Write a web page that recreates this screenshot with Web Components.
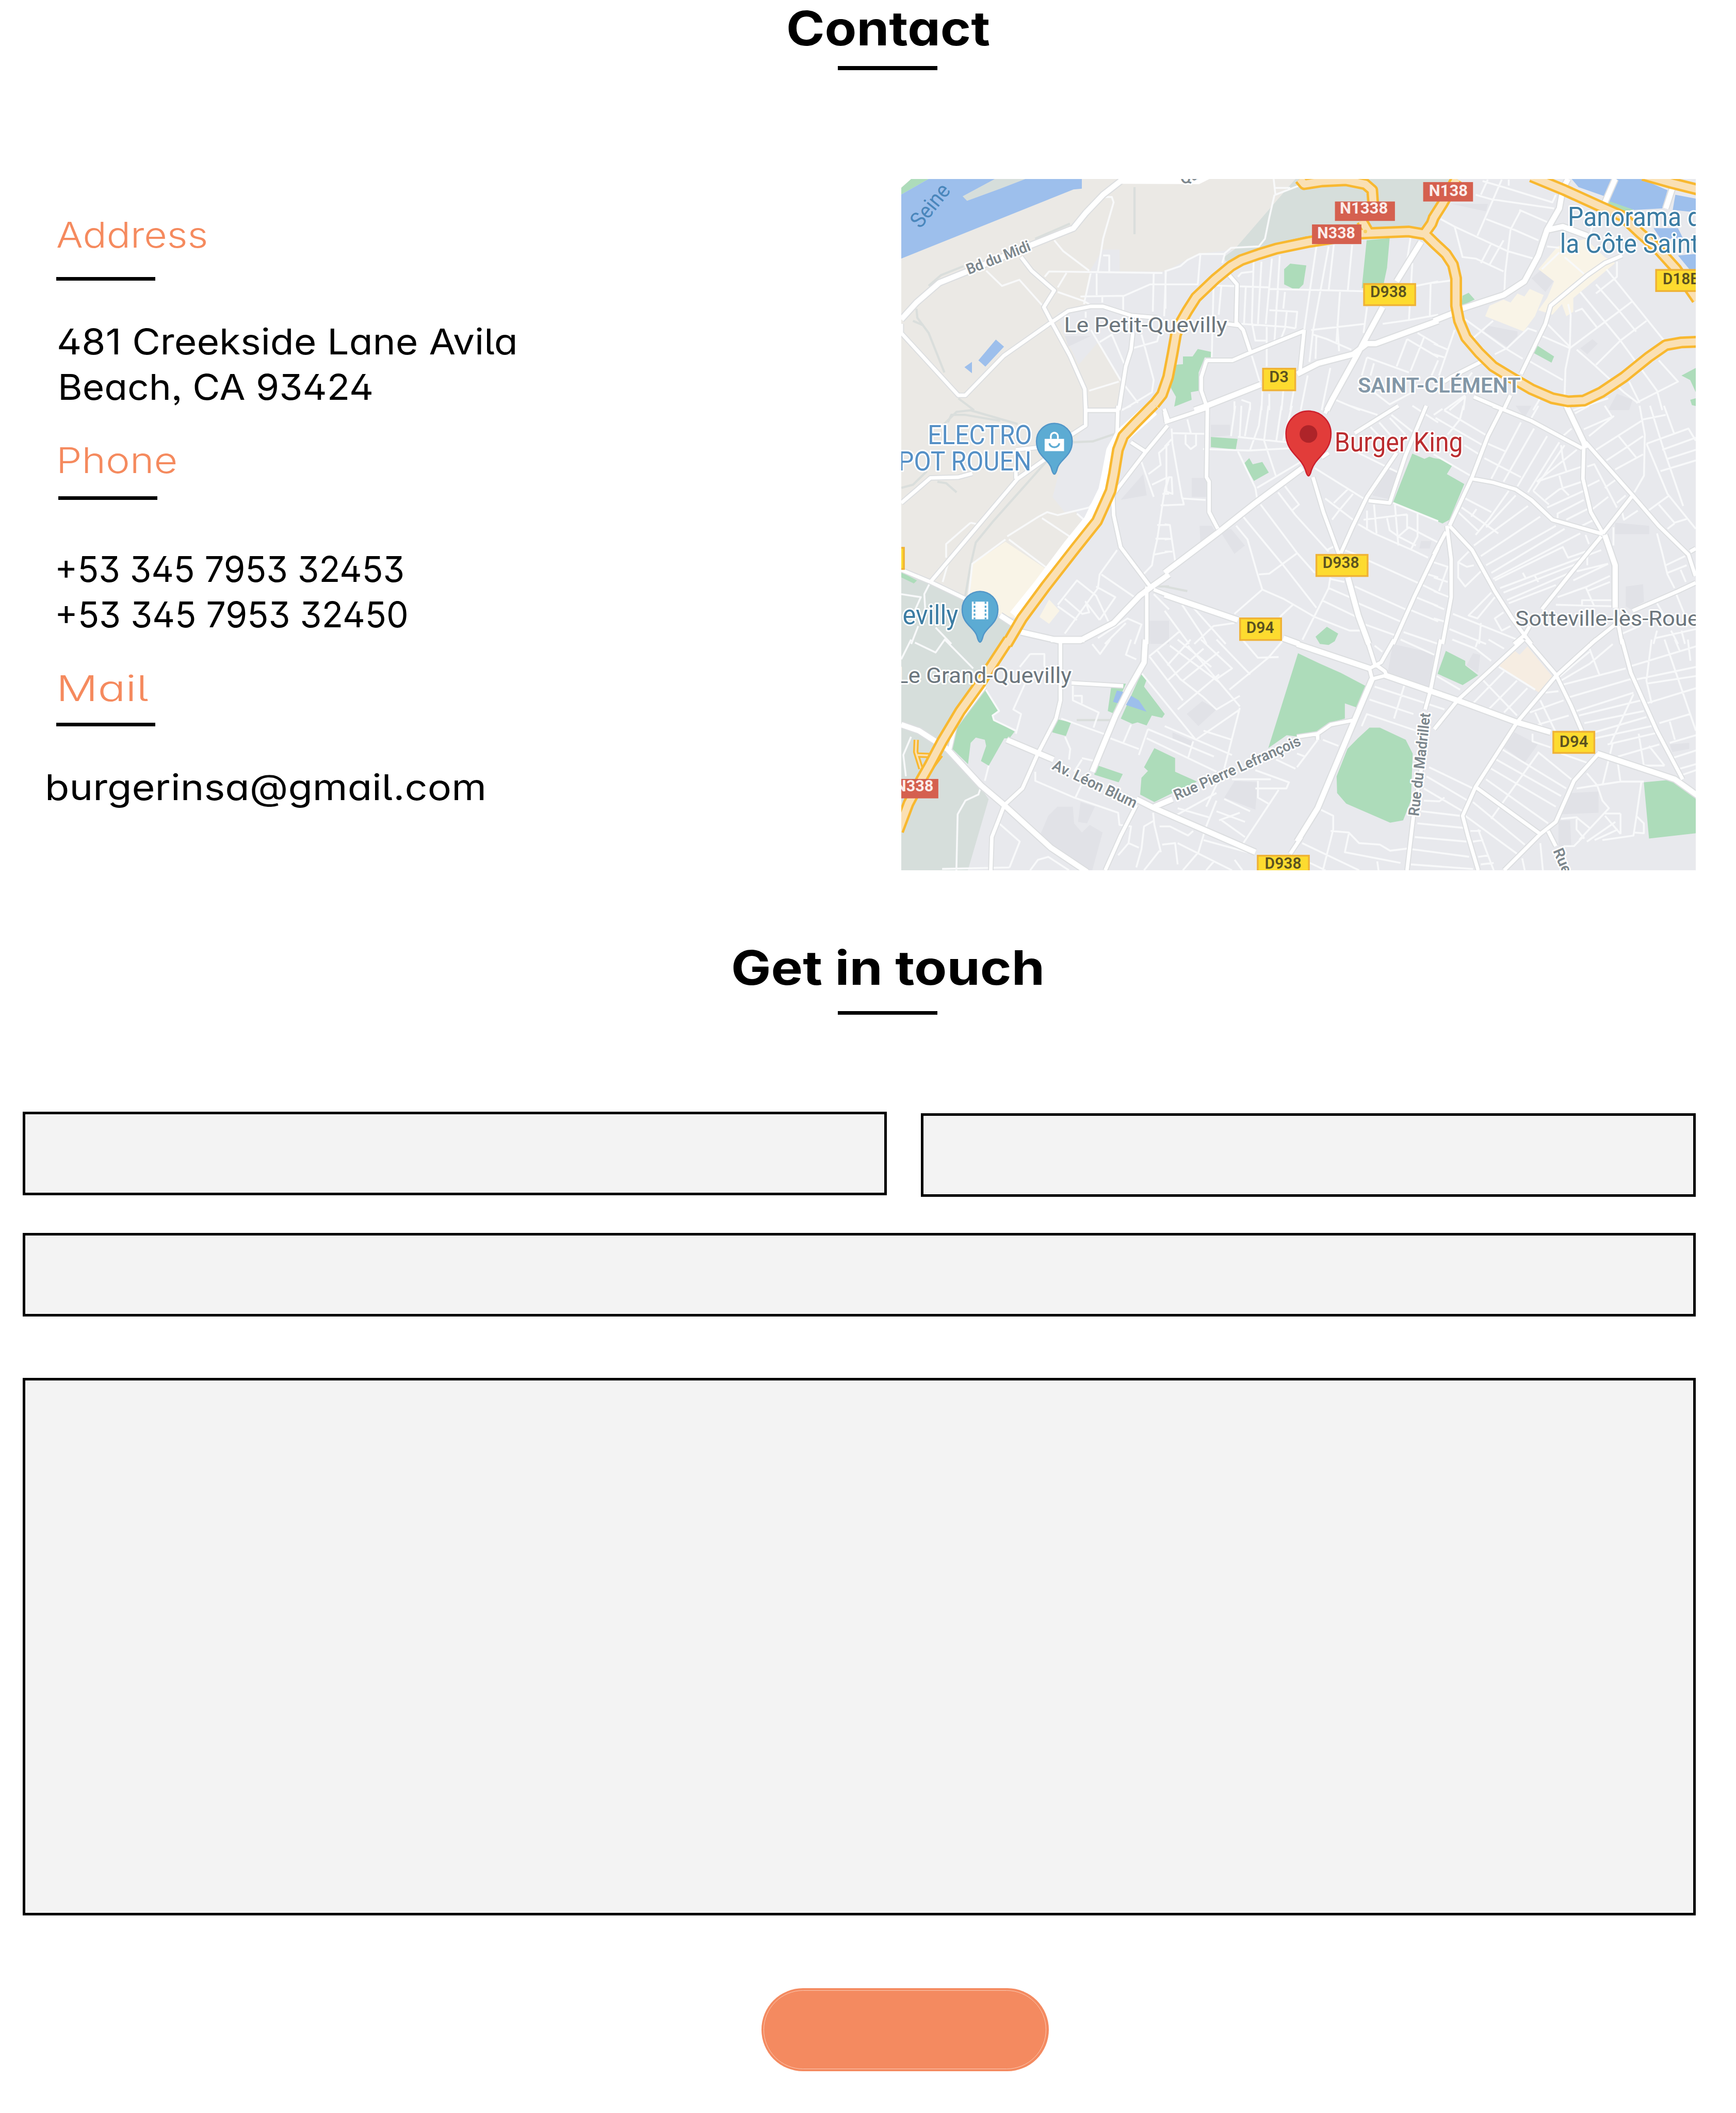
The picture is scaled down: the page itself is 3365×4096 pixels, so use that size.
<!DOCTYPE html>
<html lang="en">
<head>
<meta charset="utf-8">
<title>Contact</title>
<style>
:root{--u:.85513px}
html,body{margin:0;background:#fff}
body{width:calc(var(--u)*3935);height:calc(var(--u)*4790);overflow:hidden;font-family:Inter,"Open Sans","Liberation Sans",sans-serif;color:#000}
</style>
</head>
<body>
<contact-page></contact-page>
<script>
const def=(name,html,init)=>customElements.define(name,class extends HTMLElement{
  constructor(){super();this.attachShadow({mode:'open'}).innerHTML=html}
  connectedCallback(){init&&init.call(this,this.shadowRoot)}
});

/* A line of text stretched to a given width (design units) */
def('fit-text',`<style>
:host{display:block;white-space:nowrap;height:calc(var(--u)*var(--lh,103));line-height:calc(var(--u)*var(--lh,103));
font-size:calc(var(--u)*var(--fs,81));font-feature-settings:"cv11","cv09","cv02","cv05","ss03"}
span{display:inline-block;transform-origin:0 50%}
</style><span><slot></slot></span>`,function(r){
  const s=r.querySelector('span'),w=+this.getAttribute('w'),u=.85513;
  const fit=()=>{s.style.transform='none';const k=w*u/s.getBoundingClientRect().width;s.style.transform=`scaleX(${k})`};
  this.style.width=w*u+'px';this.style.marginLeft=(+this.getAttribute('x')||0)*u+'px';
  fit();document.fonts.ready.then(fit);
});

def('rule-line',`<style>:host{display:block;width:calc(var(--u)*225);height:calc(var(--u)*8.6);background:#000}</style>`);

def('section-heading',`<style>
:host{display:flex;flex-direction:column;align-items:center;padding-left:calc(var(--u)*89);font-weight:700;--fs:107;--lh:128}
rule-line{margin-top:calc(var(--u)*var(--gap))}
</style><slot></slot><rule-line></rule-line>`);

def('info-block',`<style>
:host{display:block}
.t{color:#f58a5e;font-weight:360}
rule-line{margin-top:calc(var(--u)*var(--a));margin-left:calc(var(--u)*var(--rx,0))}
.b{margin-top:calc(var(--u)*var(--b));font-weight:400}
</style><div class="t"><slot name="title"></slot></div><rule-line></rule-line><div class="b"><slot></slot></div>`);

def('form-field',`<style>
:host{display:block}
input,textarea{display:block;box-sizing:border-box;width:100%;height:100%;margin:0;border:calc(var(--u)*6) solid #000;border-radius:0;background:#f3f3f3;resize:none;outline:0;padding:0 20px;font:inherit}
</style>`,function(r){r.append(document.createElement(this.hasAttribute('multiline')?'textarea':'input'))});

def('send-button',`<style>
:host{display:block;width:calc(var(--u)*651);height:calc(var(--u)*189)}
button{display:block;width:100%;height:100%;margin:0;border:0;border-radius:999px;background:#f48a60;padding:calc(var(--u)*5)}
i{display:block;box-sizing:border-box;width:100%;height:100%;border-radius:999px;border:1px solid #fbc9b3}
</style><button><i></i></button>`);

/* City map. Geometry is split in tiles: [origin x, origin y, x scale, y scale] */
const TILES={1:[2030,390,.39541,.34439],2:[2640,390,.39541,.34439],3:[3250,390,.39541,.34439],
4:[2030,920,.39541,.34439],5:[2640,920,.39541,.34439],6:[3250,920,.39541,.34439],
7:[2030,1450,.58673,.34439],8:[2940,1450,.58673,.34439],0:[0,0,1,1]};
const path=(layer,close)=>Object.entries(layer).map(([t,s])=>{const[ox,oy,a,b]=TILES[t];
  return s.split('|').map(l=>'M'+l.trim().split(/\s+/).map(p=>{const[x,y]=p.split(',');return (ox+x*a).toFixed(1)+' '+(oy+y*b).toFixed(1)}).join('L')+(close?'Z':'')).join('')}).join('');

const industrial={0:'2043,406 2937,406 2798,566 2715,576 2640,616 2538,616 2538,566 2500,566 2473,610 2459,676 2465,690 2398,710 2410,755 2445,827 2489,776 2540,862 2536,907 2536,925 2461,930 2461,965 2410,1034 2386,1127 2413,1161 2437,1158 2457,1189 2378,1292 2250,1380 2109,1319 2043,1292'};
const teal={0:'2043,1292 2109,1319 2184,1357 2299,1416 2250,1520 2170,1640 2159,1698 2224,1787 2241,1812 2194,1973 2043,1973',
2:'750,46 1643,46 1500,400 1200,400 830,460 350,590 340,560 400,510',1:'570,46 745,46 600,110 410,190 385,160'};
const dark={8:'370,30 530,90 510,330 350,220|840,610 930,690 880,810 800,710|1060,1010 1165,1000 1165,1140 1020,1150|1010,1190 1055,1190 1060,1360 1010,1360|1440,690 1515,680 1515,720 1450,740|655,170 680,90 708,100 700,220',
7:'1185,405 1240,460 1170,570 1125,490|1310,930 1400,940 1390,1120 1270,1040|625,1100 685,1100 690,1210 720,1270 750,1220 800,1270 760,1519 740,1519 600,1370 560,1280 590,1160|715,1070 770,1100 740,1210 705,1200|1070,610 1150,670 1140,700 1070,650',
6:'1040,770 1235,790 1235,845 1040,845|1100,1190 1200,1175 1205,1290 1130,1340 1100,1320|470,0 560,0 520,80',
5:'265,125 375,125 375,195 265,205|155,475 240,475 240,600 155,600|320,830 380,810 460,920 400,975|200,790 270,790 290,830 205,900|1280,420 1340,440 1290,615 1190,590|1470,890 1530,890 1520,940 1460,940',
3:'300,1010 480,1050 480,1080 420,1150 290,1050|560,700 620,640 700,700 640,790|100,210 310,210 300,260|1050,1460 1140,1500 1120,1568 1000,1568|840,1160 910,1100 940,1130 880,1200',4:'1290,620 1420,450 1440,590|1450,1415 1568,1415 1568,1568 1460,1568',1:'970,1080 1120,1080 990,1150'};
const green={1:'90,46 190,46 33,148 33,105',2:'720,603 812,615 795,740 770,768 735,768 685,740 685,640|1158,450 1290,435 1275,630 1255,740 1130,765|190,1165 268,1185 265,1220 230,1220 195,1320 195,1440 150,1450 155,1500 55,1545 65,1480 35,1420 60,1270 105,1265 105,1215 160,1215',
3:'1010,185 1150,245 1090,270 990,225|200,795 235,840 160,880 165,815|590,1140 690,1215 675,1255 570,1190|1502,1290 1420,1340 1470,1370 1502,1450|1502,1490 1470,1500 1480,1535 1502,1540',
4:'33,1095 123,1150 105,1170 33,1130',5:'265,205 418,218 408,288 265,272|485,345 505,385 560,370 597,440 512,495 455,380|930,1455 995,1500 975,1550 940,1575 890,1568 865,1520',
6:'0,345 60,355 105,395 75,450 175,515 90,750 50,775 0,750 -233,635 -123,315 -53,350 -25,335',
7:'345,320 400,460 375,500 380,530 460,605 440,650 420,650 360,830 330,800 350,700 345,660 310,645 290,680 280,820 220,720 225,600|625,525 678,545 658,635 605,610|835,290 890,290 840,485 820,470|950,220 970,265 960,310 1040,490 1030,515 990,500 970,565 935,545 915,555 870,520|775,825 878,885 862,940 768,890|1000,715 1080,780 1080,870 1165,935 1070,1010 1000,1070 945,1020 950,910 975,865 960,840',
8:'-111,715 4,90 90,160 170,220 270,310 235,450 185,420 185,520 120,550 70,610 10,640 -40,630|280,580 320,580 420,660 447,750 440,1060 410,1190 360,1205 190,1080 155,1010 153,900 195,720 235,650|575,75 650,140 650,170 700,235 640,300 543,225|1340,940 1430,925 1490,960 1541,1030 1541,1275 1360,1310'};
const water={1:'190,46 570,46 385,160 410,190 600,110 745,46 1068,46 1068,110 1020,115 33,570 33,148|575,1103 622,1150 515,1282 475,1240|438,1250 438,1325 395,1285',
3:'790,46 1030,46 980,160 830,100|1050,46 1190,46 1340,120 1310,240 1150,250 1000,190|1385,150 1502,175 1502,265 1370,250|1260,370 1400,370 1430,440 1300,440|1400,550 1502,540 1502,640 1465,640',
7:'855,335 880,345 860,420 840,410|910,370 940,400 970,475 890,430'};
const cream={4:'630,895 870,1080 690,1400 590,1370 430,1250 430,1050|880,1275 940,1350 880,1435 825,1390',
3:'710,490 870,440 980,560 1040,600 800,830 800,920 760,950 735,870 680,940 600,910 650,830 690,720 600,640|550,770 630,810 580,950 515,1050 295,950 320,880 400,840 440,860 480,800 520,820'};
const peach={8:'835,65 860,100 890,45 990,250 935,350 775,165'};
const track={1:'120,900 125,960 190,1060 280,1320|360,1490 450,1568|1370,100 1370,410|100,980 160,1010|190,750 260,680 390,620|800,440 1000,340',
4:'270,130 350,40 430,30 700,120|300,110 320,60 400,60 600,100|240,500 290,510 350,570|33,540 100,520 180,430|870,360 560,760 460,900 430,1050 400,1250|1020,240 1130,235 1270,180|1480,1190 1568,1190',5:'0,1190 130,1220',7:'700,530 840,530'};
const minor={
1:'520,650 610,750 710,710 850,890|910,450 960,520 1110,650|1190,165 1240,165 1250,200 1190,440 1160,655|1190,550 1225,550 1225,655|855,690 880,655 1530,665|1120,660 1080,870|980,665 930,760|930,790 1080,850 1110,870|1060,820 1310,815 1460,740 1568,740|1153,655 1153,810|1185,820 1185,860|1305,815 1305,910|1480,670 1475,920|1550,655 1540,950|1090,920 1090,960|1120,1040 1290,1370 1390,1520|1170,1120 1240,1070 1310,1260|1360,1160 1500,1115 1510,1070|1410,1070 1480,1370 1470,1450 1300,1568|1110,1440 1280,1380',
2:'0,655 90,620 130,580 200,540 340,540 380,500 540,490 575,440 600,300 630,150|625,46 635,150 770,90|630,105 720,105|345,540 330,600|205,540 190,740 0,740|5,655 5,900|280,760 270,1220|325,750 310,940|420,690 440,665 510,655|510,590 500,990|555,590 535,1000|615,570 580,1000|660,550 630,1110|465,760 455,1000|240,745 600,760 600,770 1140,785|600,910 760,920 750,1030|700,920 690,1030 670,1090|440,1000 700,1020 750,1030|500,990 520,1110 580,1110|585,1020 585,1280|870,490 830,800 800,1040|940,490 900,740 850,1050 830,1250|970,480 940,780|1075,480 1050,780|1005,790 985,1120|690,790 680,900|650,780 640,900|1160,890 1140,1060|840,1040 1150,1000|850,1070 930,1100 1070,1170|870,1080 865,1230|990,1000 1000,1180|1410,430 1390,580|1420,600 1400,980|1525,730 1520,950|1440,750 1568,720|1250,1000 1400,975 1568,940|1450,1060 1568,1140|1390,1100 1568,1220|1390,1100 1330,1280|1490,1080 1410,1310|1160,1220 1400,1320|1160,1220 1130,1340|1200,1260 1180,1340|500,1210 550,1400|560,1440 555,1568|820,1340 780,1568|950,1290 900,1568|980,1500 1120,1568|400,1510 400,1568|600,1460 600,1568|680,1440 670,1568|740,1440 720,1568|1200,1450 1290,1530 1420,1450|1568,1240 1530,1340|440,1500 490,1520 490,1568',
3:'280,60 400,100 680,200 700,150|240,150 330,180 690,240|310,50 270,150|390,50 250,420|430,50 430,90|40,310 120,360 420,520 600,580|300,310 460,380 600,450|500,250 440,380 410,660 405,790|490,250 650,330|120,360 165,560 240,570 400,655|330,470 270,600|400,450 320,610|0,730 95,715|650,490 720,500|860,670 750,560|620,640 720,530|180,970 410,1160 510,1230|230,1090 340,980|420,1160 540,1030 590,1050|420,1160 350,1200|650,1000 780,1150|620,1080 780,1160 755,1300 750,1470|770,870 785,940 780,1160|780,1160 1060,920 1140,850|810,920 850,900 940,1030|540,1240 740,1370|820,1170 920,1270 1090,1450 1170,1520|930,1270 1070,1110 1220,980|840,790 1070,1110 1280,1440|990,640 1060,740 1320,1110|930,740 1060,910 1160,1050|1050,590 1050,690 930,800|1290,1240 1400,1380 1160,1520|1120,1380 1180,1520|1210,1330 1280,1440 1310,1568|0,1130 80,1170|120,1040 30,1340|0,1200 60,1220|90,1568 180,1480 170,1568|610,1490 570,1568|800,1568 1000,1490|60,1568 180,1470|220,1320 180,1380|910,350 900,400',
4:'200,1160 165,1240 170,1340|430,770 470,780|430,770 290,910 290,1000|300,1040 270,1160|640,860 820,730 870,700 930,720 1110,670 1190,550|840,740 1010,870|1040,710 1080,750|650,880 870,1070|630,880 440,1040 420,1250|33,1240 145,1260 110,1350|130,1450 90,1568|230,1460 320,1568|1270,950 1170,1110 1160,1200 970,1500|1180,1110 1370,1260|930,1310 1040,1150 1150,1250 1220,1420|970,1270 1070,1370 1110,1360 1090,1290 1170,1410|930,1320 1040,1410|1150,1190 1260,1260 1170,1410|1480,1240 1568,1340|1160,1530 1330,1400 1410,1440 1370,1568|1200,1568 1320,1430|1568,470 1540,580 1530,650 1500,880 1480,980 1470,1050 1420,1110|1530,580 1568,580|1520,655 1568,655|1500,785 1568,785|1490,875 1568,875|1480,980 1568,960|1410,370 1480,600|1450,450 1520,390 1510,310 1568,250|1470,520 1560,470|1290,30 1350,0',
5:'40,180 235,185|130,90 150,180|180,190 180,260 150,285 120,250 120,190|40,150 45,250 100,610 235,620|10,260 10,560|0,655 110,650 100,600|20,470 0,560 45,580 40,470 20,470|0,270 40,220|405,0 380,200|440,0 430,210|490,0 460,200|555,0 540,130 490,290|595,0 570,230 640,470|670,0 640,230|730,0 680,230|420,205 650,235 700,240|220,285 480,295 720,280|420,300 520,540 530,610|530,540 780,370|690,530 770,650 730,690|650,570 750,720 940,960|550,650 760,970 860,1100|450,730 680,1050 870,1330|410,790 475,880 530,1100 560,1210|540,1110 600,1105 760,970|400,1370 560,1210 680,1270 860,1390 1060,1480 1120,1480|660,1390 735,1310|860,410 1140,610|970,640 1050,550|920,610 1080,750|1080,580 1000,690 960,750|1110,310 1340,440|1110,780 1200,840 1420,950 1510,1000|1060,0 1220,60|1230,110 1300,200|1180,140 1230,200|1300,60 1420,170|1290,80 1380,190|1140,750 1390,715|1200,650 1215,840|1320,650 1340,920|1160,690 1160,820|1275,740 1290,820 1340,860 1400,800 1568,900|1390,715 1390,810|1450,700 1450,860 1410,950|1310,640 1568,760|1340,860 1440,920|1170,1020 1460,1170|1030,950 1100,980|930,950 980,920|950,1130 940,1200 790,1540|950,1140 1030,1160|940,1200 1060,1260|900,1280 1100,1390|1090,1190 1380,1340|1110,1300 1350,1420|1150,1440 1320,1510|1440,1260 1568,1320|1400,1340 1568,1420|1370,1490 1568,1568|1480,1180 1568,1230|1510,1110 1568,1130|0,780 30,785 40,870 60,1020|0,880 40,875|0,960 45,960|0,1350 140,1568|100,1310 210,1500 240,1568|150,1310 350,1568|0,1568 90,1480|170,1568 280,1450 400,1430|1420,0 1568,110',
6:'500,110 330,480|575,150 400,500|650,200 480,530|720,240 540,570|750,260 570,560|310,250 410,300|290,345 500,470|175,260 260,320|60,30 310,200|10,80 280,260|170,0 150,90 80,190|0,60 50,20|0,320 210,460|600,0 560,80|790,150 740,200|730,260 740,350 760,430|820,290 590,500|590,500 850,400|720,460 740,550 775,590|570,560 660,650|640,620 720,550 850,500|650,670 860,560|710,740 710,710 860,620|760,750 880,680|850,790 920,750|880,400 920,385 1050,670|880,530 950,490|910,680 1000,600|980,540 1040,490|860,155 1030,70 890,200|810,50 890,0|930,290 1190,100|990,360 1110,270 1200,200|1040,420 1200,320|1060,200 1160,340|980,0 1020,70|1180,0 1210,190 1205,460 1150,570|1200,90 1330,60|1240,0 1310,260|1320,0 1380,190|1220,250 1460,150 1502,230|1310,290 1502,210|1340,350 1502,290|1300,430 1502,360|1220,250 1340,580 1502,810|1310,260 1430,660|1230,690 1350,590|1290,650 1380,770 1450,745|1340,810 1380,775|1080,700 1090,750 1170,690|1050,640 1100,590|180,610 330,700|160,670 370,840|140,700 260,830|245,680 215,730|430,560 320,740 240,850|470,590 300,800|540,660 230,920|610,730 270,990|700,790 300,1050|750,810 330,1100|840,840 340,1140|350,1150 740,930 770,1000 870,960|380,1200 960,950|400,1230 820,1040|820,1090 1000,1040|420,1280 780,1100|430,1300 700,1180|510,1100 530,1140|580,1120 600,1160|800,1150 1000,1040|870,850 890,910|880,990 880,1050|1280,840 1310,970 1340,1110 1380,1200|1330,1050 1440,990|1340,1100 1450,1050|1415,1080 1445,1160|700,1310 1020,1320|850,1320 850,1280 1020,1280|870,1190 920,1320|710,1260 880,1190 1010,1120|880,1220 1010,1160|1030,800 1030,920|200,960 140,1030 190,1060 230,1050|140,1030 140,1130 180,1190 270,1090|330,1230 200,1380 250,1400 350,1260|400,1360 350,1400 390,1480 440,1450|110,1370 480,1540|90,1470 300,1568|0,1030 80,1060 30,1220|0,1130 80,1160|0,1220 90,1260|0,1310 60,1340|0,1400 60,1420|270,1430 260,1568|1390,1240 1440,1380|1280,1300 1330,1400|1270,1530 1502,1470|1280,1480 1260,1568|1360,1480 1400,1568|1420,1480 1440,1568|1080,1500 1180,1450',
7:'60,0 22,130|75,20 155,85 190,0 300,190|345,320 400,470 375,500 380,530 465,600|500,290 455,460 485,490 465,620|520,95 575,95 575,180|520,95 480,180|685,290 685,400 785,480 765,580|690,370 720,370 720,420|640,520 820,630|655,640 675,720 670,790|760,30 790,95 830,0|910,0 890,100 930,130|950,220 1160,660|980,110 1110,400|1010,70 1100,260 1190,380 1240,460 1330,370|1060,0 980,110|1060,40 1250,280|1090,0 1220,180|1140,0 1050,170|1190,60 1050,270|1250,80 1110,270|1180,0 1300,190 1240,260|1290,330 1440,120 1500,0|1240,0 1370,230|1340,0 1400,120 1480,115|1090,460 1250,230|1130,40 1330,440|1330,450 1270,850|1160,660 1330,460|975,590 1230,770|1040,570 1300,760|975,590 940,760|830,650 940,720|910,560 880,680|970,650 1240,870|1190,600 1300,660|1150,670 1130,780|540,870 540,930 690,1040 860,1140 865,1220 910,1230 900,1340 860,1420|720,950 695,1040|720,790 690,870|720,780 770,800|235,1519 240,1150 270,1060 320,1020 330,970|360,830 345,930|400,1210 480,1330 440,1500|180,1510 440,1500|520,1519 550,1450 590,1430 670,1519|995,1140 1000,1220 1025,1400|1000,1190 960,1230 950,1380 930,1500|1020,1230 1060,1230 1130,1290 1150,1260|1200,1230 1170,1400 1110,1519|1030,1350 1080,1340 1090,1480|1090,1340 1300,1519|900,1340 940,1370|1020,1390 960,1519|1190,1320 1360,1400|1080,1160 1240,1010|1090,1110 1210,1170|1240,1060 1200,1230|1270,1050 1370,1130|1240,1130 1350,1200|1260,1190 1350,1300|1300,920 1450,920|1250,920 1200,1100|1400,930 1400,1040 1440,1080|1390,980 1510,980 1520,940 1390,860|1480,990 1340,1350|1470,790 1545,850|60,640 30,760 40,900|1330,1140 1250,1190|1230,1460 1200,1519|1310,1450 1340,1519',
8:'300,310 570,460|280,395 450,490|415,300 375,520|250,570 270,490 460,600|300,40 330,80|400,0 530,100|540,240 630,330|600,0 690,60 750,140|700,0 690,50|740,0 800,60|800,210 680,420|850,270 740,460|890,320 800,480|720,270 850,500|780,180 920,330|940,400 1000,610|920,480 950,590|900,480 1030,400|930,560 1050,500|960,350 1010,340|510,840 680,980|500,900 660,1060|490,980 640,1130|790,720 1040,980|770,790 1020,1030|750,850 1000,1100|730,920 970,1210|680,1070 880,1350|650,1160 850,1410|935,740 750,1180|930,740 1060,920|490,1060 550,1065 570,1040|480,1130 630,1160|465,1210 645,1240|455,1300 655,1330|445,1380 665,1430|440,1480 680,1510|700,1250 760,1519|670,1260 710,1260|680,1330 720,1320|700,1430 740,1420|710,1480 760,1470|940,1340 950,1519|1010,280 1130,160 1220,30|1010,250 1130,80|1020,300 1270,190|1050,380 1290,260|1080,470 1300,350|1090,500 1330,400|1110,550 1340,470|1130,620 1350,510|1150,650 1370,570|1200,690 1400,610|1280,180 1541,45|1290,270 1541,180|1350,290 1541,240|1350,420 1541,320|1400,550 1520,490|1440,680 1541,630|1210,690 1300,360|1130,60 1170,240|1370,0 1350,270 1370,420|1420,0 1541,600|1460,0 1480,80|1510,0 1520,140|1320,620 1340,830 1420,830|1360,700 1420,830|1220,680 1180,960|1240,820 1250,940|1080,980 1250,935 1340,935|1330,940 1310,1180 1300,1290 1180,1320|1310,1160 1340,1210 1340,1275 1300,1270|1120,880 1160,960 1180,1060 1205,1110 1090,1320|1250,1145 1250,1280|1190,1145 1250,1145|1190,1160 1250,1280|1020,1180 1080,1170 1130,1240|1230,1200 1120,1330|1240,1250 1150,1320|1080,1180 1080,1250 1110,1310|1240,770 1400,690|1450,780 1541,730|1480,850 1541,820|1490,890 1541,860|1440,540 1460,660|80,1110 140,1160 140,1250 100,1519|130,1260 200,1270 240,1340 320,1350 360,1390 430,1375|200,1280 185,1400 400,1470|20,1340 240,1519|310,1460 315,1519|50,1470 110,1519|910,620 910,670 980,710|1020,750 1120,810|80,660 0,840|100,660 160,700|0,750 30,770|1030,1360 1070,1360 1110,1290|870,1440 880,1519'};
const mid={
1:'720,560 780,650 910,780 850,890 900,1000 1000,1210 1085,1430 1090,1568|33,1000 33,1060 360,1470 400,1470 620,1210 880,1000 990,915 1120,885 1190,885 1350,945 1500,960|1360,1060 1350,1170 1320,1280 1280,1568',
2:'370,680 415,740 410,990 450,1040 490,1180|360,1000 420,1010|235,1240 390,1240 490,1190 800,1045|800,1040 775,1320|240,1240 210,1350 210,1440 240,1540',
3:'270,1250 100,1350 60,1380|230,1480 390,1560|1080,550 980,600 880,680 670,880 640,1000 500,1330|440,1470 400,1568',
4:'1090,0 1090,130 1010,190|1275,0 1270,180 1240,260|1090,30 1275,30|33,640 200,475 360,470 440,445|860,350 700,480 200,1160|690,480 690,430|690,290 810,275|33,1080 200,1160 400,1270|1245,580 1250,720 1290,930 1460,1190|1250,580 1430,310 1560,130|1350,240 1430,300|1440,1190 1440,1568|1480,1210 1568,1250|1540,20 1568,110',
5:'0,110 245,15|245,0 240,470 255,500 255,700 305,810|0,40 10,110|850,470 910,700 1000,980|1010,970 1080,790 1160,600 1330,310|1500,0 1380,330 1290,640 1170,625|1568,930 1430,1260 1310,1568|1090,180 1340,0|940,0 920,50|940,310 900,340',
6:'390,20 310,200 220,470 90,790|340,0 400,25 560,100 850,280|860,270 855,480 900,700 970,840|220,480 340,505 470,550 560,620 680,750 970,845|970,840 1140,590|90,790 220,950 350,1220 450,1400 520,1510|960,860 780,1110 620,1340|550,1450 520,1510 460,1568|520,1510 560,1568|75,790 100,1010 100,1260 50,1568|70,830 0,980|1502,1165 1400,1220 1140,1350|1040,1440 900,1568|1470,960 1502,940|870,240 1140,590 1290,790 1460,980 1500,1120|1060,1450 1080,1568',
7:'637,0 637,400 620,520 550,750 490,980 420,1090 395,1200 372,1300 368,1519|930,1090 870,1290 810,1519|345,310 230,570 210,720|1568,1300 1525,1410|680,285 880,305',
8:'270,0 300,160 340,210 345,235|375,0 325,150 280,190 290,260 345,235|555,0 515,340 495,460|495,480 490,750 450,1160 425,1519|875,0 620,400 530,590|885,0 1000,230 1060,440 1100,600|1155,0 1000,240 850,545 690,970 640,1160 660,1290 700,1519|690,970 940,1280|1165,750 1070,930 1000,1200 940,1280 800,1519|970,1260 1000,1360|1255,0 1290,220 1390,600 1490,920|0,640 80,620 130,560 220,530|80,620 80,660'};
const major={
1:'33,970 120,860 250,730 400,660 780,480 1020,370 1090,270 1190,150 1290,60',
2:'170,1568 240,1540 550,1400|760,1330 880,1260 1080,1200 1160,1130 1210,1130 1568,980|1470,460 1330,720|1250,890 1160,1080 1100,1210 960,1500 930,1568',
3:'0,980 110,930|160,900 400,810 520,720 600,550 650,380 720,240 740,110 770,46|660,380 740,360 880,420|1040,46 970,230|1370,100 1330,240',
4:'600,1380 680,1440|720,1490 930,1545 1060,1545 1250,1430 1400,1250 1470,1190 1568,1110',
5:'0,1100 300,840 520,640 790,410|1050,1130 1110,1380 1170,1568|0,1245 420,1410|680,1530 770,1568',
6:'760,0 860,240 870,280|980,850 1040,1050 1040,1330',
7:'22,560 90,600 200,720 330,960 420,1090 600,1370 740,1530|965,0 960,150 900,330 850,500 760,870|430,660 610,790|930,1050 1000,1110 1390,1400|1000,1100 1070,1050|600,0 730,0',
8:'0,30 280,190|340,235 620,400 850,545 980,610|1160,750 1460,920 1550,1030|290,260 220,540 80,1110 0,1330'};
const topRoad={1:'1280,46 1568,46 1800,46 1740,80 1275,78'};
const verge={4:'1470,20 1300,195 1250,300 1225,450 1205,560 1120,760 1000,930 830,1190 690,1390'};
const highway={
2:'1000,430 830,460 640,505 540,540 440,580 380,620 290,705 180,825 130,915 90,995 65,1070 45,1200 20,1350 -15,1465 -60,1530|775,46 800,80 900,62 1040,55 1150,80 1190,120 1195,200|1130,320 1165,390|1120,405 1400,392 1490,410|1490,405 1530,340 1543,300',
3:'130,46 50,210 -5,310|-53,405 0,465 70,540 110,610 128,700 128,880 145,980 185,1090 260,1190 340,1280 440,1350 560,1430 680,1490 770,1510 860,1505 960,1450 1090,1350 1230,1220 1330,1140 1420,1122 1510,1118|560,30 750,120 960,230 1080,290 1180,400 1280,500 1390,640 1510,840|1200,20 1370,75 1510,115',
4:'1482,-10 1370,120 1305,200 1275,290 1252,450 1233,560 1155,760 1030,940 860,1190 725,1400 638,1570',
7:'437,0 322,300 250,470 180,670 130,830 100,920 50,1080 10,1260'};
const ramp={7:'80,660 78,740 98,850|85,760 160,765|175,760 140,840',2:'700,470 820,440'};

const badge=(x,y,w,h,c,t,tx,tb,tw)=>`<rect x="${x+(c?0:2)}" y="${y+(c?0:2)}" width="${w-(c?0:4)}" height="${h-(c?0:4)}" fill="${c?'#d5604f':'#fddb2f'}" ${c?'':'stroke="#efb236" stroke-width="4"'}/>${t?`<text x="${tx}" y="${tb}" font-size="37" font-weight="${c?700:600}" fill="${c?'#fbecea':'#5b5220'}" textLength="${tw}" lengthAdjust="spacingAndGlyphs">${t}</text>`:''}`;
const label=(x,y,s,c,t,w,rot=0,wt=450,halo='#fff')=>`<text class="h" transform="translate(${x} ${y}) rotate(${rot})" font-size="${s}" font-weight="${wt}" fill="${c}" stroke="${halo}" ${w?`textLength="${w}" lengthAdjust="spacingAndGlyphs"`:''}>${t}</text>`;
const pin=(cx,top,r,tip,fill,st)=>`<path d="M${cx} ${tip}C${cx-3} ${tip} ${cx-5} ${tip-6} ${cx-7} ${tip-14}C${cx-r*.32} ${tip-r*.85} ${cx-r} ${top+r*1.85} ${cx-r} ${top+r}A${r} ${r} 0 0 1 ${cx+r} ${top+r}C${cx+r} ${top+r*1.85} ${cx+r*.32} ${tip-r*.85} ${cx+7} ${tip-14}C${cx+5} ${tip-6} ${cx+3} ${tip} ${cx} ${tip}Z" fill="${fill}" stroke="${st}" stroke-width="3"/>`;
const G='#6c767d',S='#7d878d',B='#3b7ca3',E='#5590c6';
const fill=(l,c)=>`<path d="${path(l,1)}" fill="${c}"/>`;
const line=(l,c,w)=>`<path d="${path(l)}" stroke="${c}" stroke-width="${w}" fill="none" stroke-linejoin="round"/>`;

def('city-map',`<style>
:host{display:block;width:calc(var(--u)*1801);height:calc(var(--u)*1567);overflow:hidden}
svg{display:block;width:100%;height:100%}
text{font-family:Roboto,"Liberation Sans",sans-serif;white-space:pre}
.h{paint-order:stroke;stroke-width:7px;stroke-linejoin:round}
</style><svg viewBox="2043 406 1801 1567" preserveAspectRatio="none">
<rect x="2043" y="406" width="1801" height="1567" fill="#e8e9ed"/>
${fill(industrial,'#ebe9e5')}${fill(teal,'#d6dedb')}${fill(dark,'#e1e2e7')}${fill(cream,'#f9f4e7')}${fill(peach,'#f6ede2')}${fill(green,'#addcba')}${fill(water,'#9dbfec')}
<path d="M2043 406h22l-22 19z" fill="#fff"/>
${line(track,'#dadedc',5)}
${line(minor,'#f8f9fa',4.2)}
${line(mid,'#dcdee0',12.5)}${line(major,'#dcdee0',17)}
${line(mid,'#fff',8)}${line(major,'#fff',12)}${fill(topRoad,'#fff')}
${line(verge,'#fff',34)}
${line(ramp,'#f8b830',12)}${line(ramp,'#fbe0b0',4)}
${line(highway,'#f8b830',27)}${line(highway,'#fae0b4',16)}
<circle cx="3095" cy="525" r="4" fill="#f8d060"/>
${badge(3026,457,136,44,1,'N1338',3037,484.5,109)}
${badge(2974,509,112,44.5,1,'N338',2986,540.5,86)}
${badge(3226,413,113,44,1,'N138',3239,445,88)}
${badge(2000,1766,127,44,1,'N338',2029,1794,87)}
${badge(3090,642,120,52,0,'D938',3106,674,83)}
${badge(2861,834,77,53,0,'D3',2877,867,44)}
${badge(3752,610,122,52,0,'D18E',3769,645,82)}
${badge(2982,1256,120,52,0,'D938',2998,1288,83)}
${badge(2809,1400,97,53,0,'D94',2825,1435,63)}
${badge(3519,1657,97,52,0,'D94',3535,1693,65)}
${badge(2849,1938,120,52,0,'D938',2867,1969,83)}
${badge(1990,1240,61,52,0,'')}
${label(2086,520,49,'#4a86bb','Seine',112,-51,450,'none')}
${label(2196,623,34,S,'Bd du Midi',153,-21.5,600)}
${label(2680,419,34,S,'Qu',0,-20,600)}
${label(2412,753,48,G,'Le Petit-Quevilly',370)}
${label(3078,890,48,'#8397a7','SAINT-CLÉMENT',369,0,650)}
${label(3554,512,60,B,'Panorama d',303)}
${label(3536,573,60,B,'la Côte Saint',315)}
${label(2103,1007,61,E,'ELECTRO',236)}
${label(2036,1067,61,E,'POT ROUEN',302)}
${label(2046,1415,61,B,'evilly',126)}
${label(2031,1549,49,G,'Le Grand-Quevilly',398)}
${label(3025,1023,61,'#bb2c2f','Burger King',291)}
${label(3435,1419,48,G,'Sotteville-lès-Roue',417)}
${label(2383,1743,34,S,'Av. Léon Blum',208,25.5,600)}
${label(2667,1815,34,S,'Rue Pierre Lefrançois',311,-24,600)}
${label(3216,1851,34,S,'Rue du Madrillet',235,-83.5,600)}
${label(3520,1929,34,S,'Rue',0,67,600)}
${pin(2390,960,40.5,1075,'#5cabd3','#5296c8')}
${pin(2221.5,1341,40.5,1456,'#5cabd3','#5296c8')}
<path d="M2368 995h44v28h-44z" fill="#fff"/><path d="M2382 995v-6a8 8 0 0 1 16 0v6" fill="none" stroke="#fff" stroke-width="4"/><path d="M2379 1005a11 9 0 0 0 22 0" fill="none" stroke="#5cabd3" stroke-width="4"/>
<path d="M2203 1364h37v40h-37z" fill="#fff"/><path d="M2209 1364v40M2234 1364v40" stroke="#5cabd3" stroke-width="4" stroke-dasharray="5 4"/>
${pin(2966,932,51,1079,'#e23c3a','#cc1f2c')}
<circle cx="2966" cy="984" r="20" fill="#ae2429"/>
</svg>`);

def('contact-page',`<style>
:host{display:block;padding:0 calc(var(--u)*91) 0 calc(var(--u)*52)}
section-heading{margin:0 calc(var(--u)*-91) 0 calc(var(--u)*-52)}
.info{display:flex;justify-content:space-between;align-items:flex-start;margin-top:calc(var(--u)*247.4)}
.left{display:flex;flex-direction:column;padding:calc(var(--u)*74.6) 0 0 calc(var(--u)*75)}
.left info-block+info-block{margin-top:calc(var(--u)*63.7)}
.touch{margin-top:calc(var(--u)*156)}
form{display:grid;grid-template-columns:calc(var(--u)*1958) calc(var(--u)*1757);justify-content:space-between;margin-top:calc(var(--u)*220)}
form-field{height:calc(var(--u)*189)}
.b{margin-top:calc(var(--u)*3)}
.c{grid-column:1/3;margin-top:calc(var(--u)*82);height:calc(var(--u)*190)}
.d{grid-column:1/3;margin-top:calc(var(--u)*139);height:calc(var(--u)*1218)}
send-button{grid-column:1/3;margin:calc(var(--u)*165) 0 0 calc(var(--u)*1674)}
</style>
<section-heading style="--gap:22"><fit-text w="462" style="position:relative;left:1px">Contact</fit-text></section-heading>
<div class="info">
 <div class="left">
  <info-block style="--a:44.4;--b:85.6"><fit-text slot="title" w="344" x="0">Address</fit-text>
   <fit-text w="1045" x="2">481 Creekside Lane Avila</fit-text><fit-text w="716" x="4">Beach, CA 93424</fit-text></info-block>
  <info-block style="--a:30.3;--b:105;--rx:5"><fit-text slot="title" w="275" x="0">Phone</fit-text>
   <fit-text w="793" x="-3">+53 345 7953 32453</fit-text><fit-text w="802" x="-3">+53 345 7953 32450</fit-text></info-block>
  <info-block style="--a:27;--b:85.7"><fit-text slot="title" w="209" x="0">Mail</fit-text>
   <fit-text w="1001" x="-25">burgerinsa@gmail.com</fit-text></info-block>
 </div>
 <city-map></city-map>
</div>
<section-heading class="touch" style="--gap:35"><fit-text w="711">Get in touch</fit-text></section-heading>
<form><form-field></form-field><form-field class="b"></form-field><form-field class="c"></form-field><form-field class="d" multiline></form-field><send-button></send-button></form>`);
</script>
</body>
</html>
